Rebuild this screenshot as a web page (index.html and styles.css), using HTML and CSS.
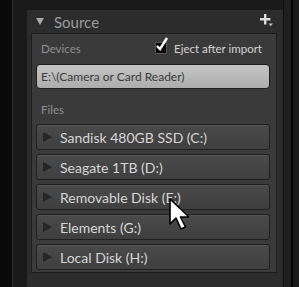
FILE: index.html
```html
<!DOCTYPE html>
<html lang="en">
<head>
  <meta charset="UTF-8">
  <title>Source</title>
  <link rel="stylesheet" href="styles.css">
</head>
<body>
  <div class="app">
    <div class="rail"></div>
    <div class="side">
      <div class="source">
        <div class="header">
          <span class="arrow-down"></span>
          <span class="title">Source</span>
          <svg class="plus" width="14" height="14" viewBox="0 0 14 14">
            <path d="M5 1h2.4v4H11.4v2.4H7.4v4H5v-4H1V5h4z" fill="#dcdcdc"/>
            <path d="M9.5 10.5h4.5l-2.25 2.8z" fill="#bdbdbd"/>
          </svg>
        </div>
        <div class="box">
          <div class="devices">
            <span class="label">Devices</span>
            <label class="eject">
              <span class="check">
                <svg width="14" height="16" viewBox="0 0 14 16">
                  <path d="M2 9l3 3 7-11" stroke="#fff" stroke-width="2.4" fill="none"/>
                </svg>
              </span>
              Eject after import
            </label>
          </div>
          <div class="field">E:\(Camera or Card Reader)</div>
          <div class="label files">Files</div>
          <div class="drives">
            <div class="drive"><span class="arrow-right"></span>Sandisk 480GB SSD (C:)</div>
            <div class="drive"><span class="arrow-right"></span>Seagate 1TB (D:)</div>
            <div class="drive"><span class="arrow-right"></span>Removable Disk (E:)</div>
            <div class="drive"><span class="arrow-right"></span>Elements (G:)</div>
            <div class="drive"><span class="arrow-right"></span>Local Disk (H:)</div>
          </div>
        </div>
      </div>
    </div>
    <div class="edge"></div>
    <div class="gap"></div>
    <div class="rest"></div>
  </div>

  <svg class="cursor" width="20" height="33" viewBox="0 0 20 33">
    <path d="M1 1v25l6-6 5 11 4.5-2-5-10h8.5z" fill="#fff" stroke="#000" stroke-width="1.6" stroke-linejoin="round"/>
  </svg>
</body>
</html>
```

FILE: styles.css
```css
body {
  margin: 0;
  background-color: #0a0a0a;
  font-family: 'Lato', 'Liberation Sans', sans-serif;
  overflow: hidden;
}

.app {
  display: flex;
  height: 287px;
}

.rail {
  width: 12px;
  background-color: #0a0a0a;
  border-right: 1px solid #2c2c2c;
}

.side {
  width: 270px;
  padding: 10px 0 0 14px;
  background-color: #1a1a1a;
  box-sizing: border-box;
}

.source {
  height: 100%;
  background-color: #2c2c2c;
}

.header {
  display: flex;
  align-items: center;
  height: 23px;
  padding: 0 10px 0 9px;
}

.arrow-down {
  width: 0;
  height: 0;
  border-left: 4px solid transparent;
  border-right: 4px solid transparent;
  border-top: 7px solid #a8a8a8;
  margin-right: 10px;
}

.title {
  color: #9c9c9c;
  font-size: 15px;
  flex: 1;
}

.plus {
  margin-top: -3px;
}

.box {
  margin: 0 6px 0 4px;
  height: 240px;
  background-color: #3a3a3a;
  border: 1px solid #1c1c1c;
  box-sizing: border-box;
  padding: 0 6px 0 4px;
}

.devices {
  display: flex;
  justify-content: space-between;
  align-items: center;
  height: 28px;
  padding: 0 8px 0 5px;
}

.label {
  color: #8e8e8e;
  font-size: 11.5px;
}

.eject {
  display: flex;
  align-items: center;
  color: #d4d4d4;
  font-size: 11.5px;
}

.check {
  position: relative;
  width: 10px;
  height: 10px;
  background-color: #000;
  border: 1px solid #555;
  margin-right: 7px;
}

.check svg {
  position: absolute;
  left: -1px;
  top: -6px;
}

.field {
  margin-top: 2px;
  height: 25px;
  line-height: 24px;
  padding-left: 4px;
  border-radius: 4px;
  border: 1px solid #1e1e1e;
  background: linear-gradient(#c4c4c4, #adadad);
  color: #3a3a3a;
  font-size: 12px;
  box-sizing: border-box;
}

.files {
  margin: 14px 0 0 5px;
  height: 15px;
}

.drives {
  display: flex;
  flex-direction: column;
  gap: 4px;
  margin-top: 6px;
}

.drive {
  display: flex;
  align-items: center;
  height: 26px;
  border: 1px solid #202020;
  border-radius: 3px;
  background: linear-gradient(#4a4a4a, #3f3f3f);
  box-shadow: inset 0 1px 0 #555;
  color: #d6d6d6;
  font-size: 14px;
  box-sizing: border-box;
}

.arrow-right {
  width: 0;
  height: 0;
  border-top: 5px solid transparent;
  border-bottom: 5px solid transparent;
  border-left: 9px solid #262626;
  margin: 0 8px 0 6px;
}

.edge {
  width: 7px;
  background-color: #1f1f1f;
  border-left: 1px solid #111;
}

.gap {
  width: 2px;
  background-color: #050505;
}

.rest {
  flex: 1;
  background-color: #1b1b1b;
}

.cursor {
  position: absolute;
  left: 169px;
  top: 198px;
}
```
